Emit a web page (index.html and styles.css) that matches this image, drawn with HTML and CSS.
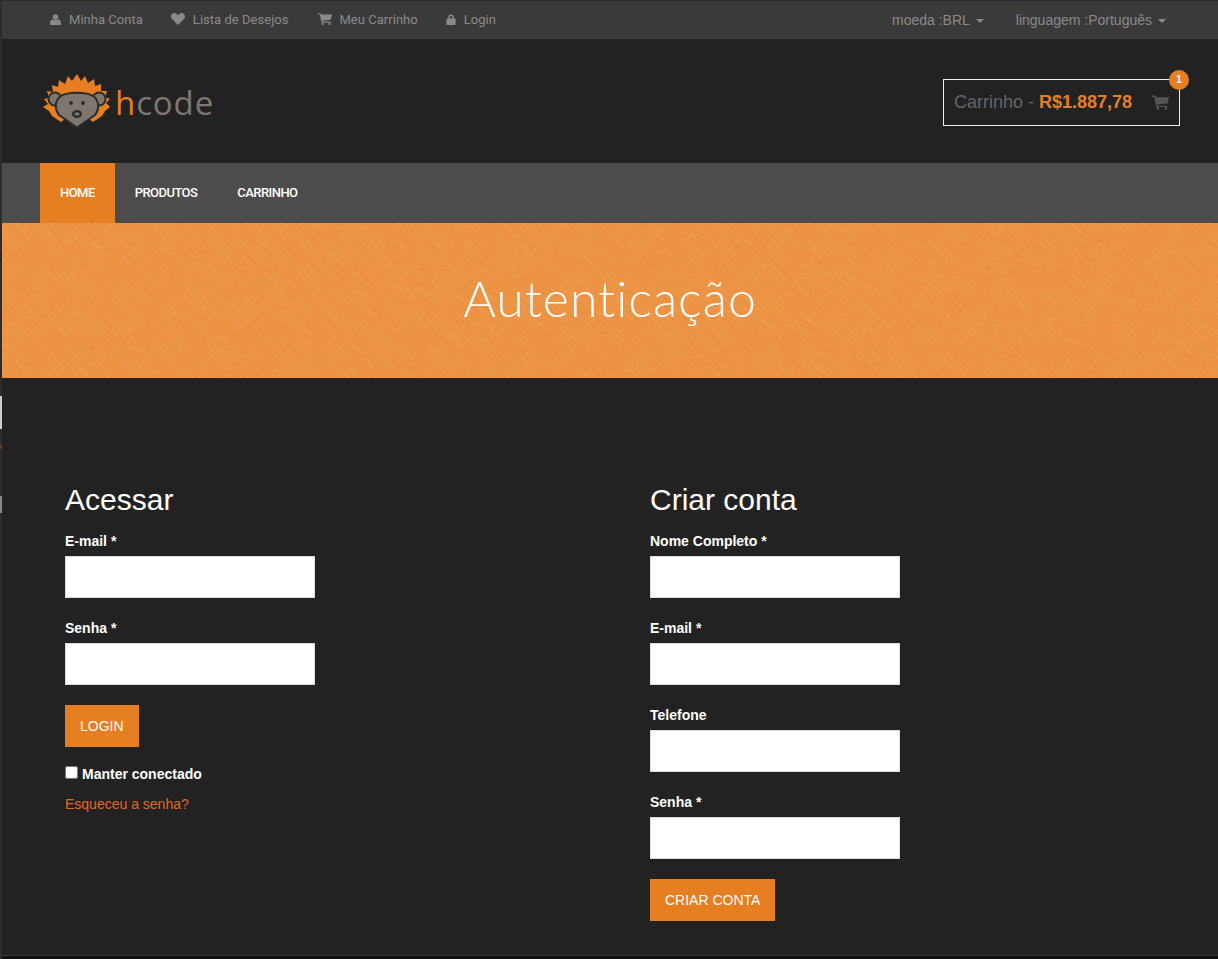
FILE: index.html
```html
<!DOCTYPE html>
<html lang="pt-BR">
<head>
<meta charset="utf-8">
<title>Autenticação</title>
<link rel="stylesheet" href="styles.css">
</head>
<body>
<div class="edge"><i class="e1"></i><i class="e2"></i><i class="e3"></i></div>
<div class="page">
  <div class="topbar">
    <ul class="usermenu">
      <li><svg class="ico user" viewBox="0 0 12 12"><circle cx="6" cy="3.2" r="3"/><path d="M1 12c-.6 0-1-.4-1-1C0 8.200.8 5.800 2.800 5.600 3.600 6.400 4.700 6.900 6 6.900s2.400-.5 3.200-1.300C11.200 5.800 12 8.200 12 11c0 .6-.4 1-1 1z"/></svg>Minha Conta</li>
      <li><svg class="ico wide" viewBox="0 0 14 12"><path d="M7 12 1 6C-.4 4.500-.3 2 1 .9 2.400-.3 4.300-.2 5.600 1L7 2.300 8.400 1c1.300-1.200 3.200-1.300 4.600-.1 1.300 1.100 1.400 3.600 0 5.100z"/></svg>Lista de Desejos</li>
      <li><svg class="ico wide cart" viewBox="0 0 14 12"><path d="M0 .3h2.600l.4 1.300h11l-1.200 5.200-8.500.9.200.9h8v1.100H3.600L1.800 1.400H0z"/><circle cx="4.700" cy="10.900" r="1.100"/><circle cx="11.600" cy="10.900" r="1.100"/></svg>Meu Carrinho</li>
      <li><svg class="ico lock" viewBox="0 0 10 12"><path d="M2 5V3.500a3 3 0 0 1 6 0V5h1.200c.5 0 .8.300.8.800v5.400c0 .5-.3.800-.8.800H.8c-.5 0-.8-.3-.8-.8V5.800C0 5.300.3 5 .8 5zm1.600 0h2.800V3.500a1.400 1.400 0 0 0-2.800 0z"/></svg>Login</li>
    </ul>
    <ul class="prefs">
      <li>moeda :BRL<b class="caret"></b></li>
      <li>linguagem :Português<b class="caret"></b></li>
    </ul>
  </div>

  <header class="brand">
    <a class="logo" href="#">
      <svg class="mark" viewBox="0 0 67 54">
        <path class="fur" d="M18 48 9 42 6 37 0 33 5 30 1 25 6 24 4 17 10 18 9 11 15 13 16 6 22 10 25 2 29 7 34 0 38 7 42 2 45 9 51 5 52 12 58 10 58 17 64 17 62 23 67 25 63 29 67 33 62 37 59 42 50 48 34 36Z"/>
        <circle class="ear" cx="12" cy="25" r="6.500"/>
        <circle class="ear" cx="56" cy="25" r="6.500"/>
        <path class="face" d="M34 53.500 16 41C11 35 12 26 18 22 24 17.500 44 17.500 50 22 56 26 57 35 52 41Z"/>
        <circle class="dark" cx="28" cy="29" r="1.900"/><circle class="dark" cx="40" cy="29" r="1.900"/>
        <ellipse class="dark" cx="34" cy="40" rx="5" ry="4"/><ellipse class="face-in" cx="34" cy="40" rx="2.600" ry="1.800"/>
      </svg>
      <span class="word"><em>h</em>code</span>
    </a>
    <div class="cartbox">
      <span class="cartlabel">Carrinho - <strong>R$1.887,78</strong></span>
      <svg class="carticon" viewBox="0 0 14 12"><path d="M0 .3h2.600l.4 1.300h11l-1.200 5.200-8.500.9.200.9h8v1.100H3.600L1.800 1.400H0z"/><circle cx="4.700" cy="10.900" r="1.100"/><circle cx="11.600" cy="10.900" r="1.100"/></svg>
      <span class="badge">1</span>
    </div>
  </header>

  <nav class="mainnav">
    <a class="active" href="#">Home</a>
    <a href="#">Produtos</a>
    <a href="#">Carrinho</a>
  </nav>

  <section class="hero">
    <svg class="grain" width="1216" height="155" aria-hidden="true">
      <defs>
        <filter id="brush" x="-400" y="-900" width="2400" height="2000" filterUnits="userSpaceOnUse" primitiveUnits="userSpaceOnUse">
          <feTurbulence type="fractalNoise" baseFrequency="0.03 0.7" numOctaves="3" seed="7"/>
          <feColorMatrix type="matrix" values="0 0 0 0 0.80  0 0 0 0 0.42  0 0 0 0 0.10  2.600 0 0 0 -1.050"/>
        </filter>
        <filter id="brush2" x="-400" y="-900" width="2400" height="2000" filterUnits="userSpaceOnUse" primitiveUnits="userSpaceOnUse">
          <feTurbulence type="fractalNoise" baseFrequency="0.04 0.6" numOctaves="2" seed="21"/>
          <feColorMatrix type="matrix" values="0 0 0 0 1  0 0 0 0 0.78  0 0 0 0 0.55  2.200 0 0 0 -1"/>
        </filter>
      </defs>
      <rect class="stroke-a" x="-400" y="-900" width="2400" height="2000" filter="url(#brush)" transform="rotate(40)"/>
      <rect class="stroke-b" x="-400" y="-900" width="2400" height="2000" filter="url(#brush2)" transform="rotate(42)"/>
    </svg>
    <h1>Autenticação</h1>
  </section>

  <main class="forms">
    <form class="col">
      <h2>Acessar</h2>
      <label class="field">E-mail *<input type="text"></label>
      <label class="field">Senha *<input type="password"></label>
      <button class="btn" type="button">LOGIN</button>
      <label class="remember"><input type="checkbox">Manter conectado</label>
      <a class="forgot" href="#">Esqueceu a senha?</a>
    </form>
    <form class="col">
      <h2>Criar conta</h2>
      <label class="field">Nome Completo *<input type="text"></label>
      <label class="field">E-mail *<input type="text"></label>
      <label class="field">Telefone<input type="text"></label>
      <label class="field">Senha *<input type="password"></label>
      <button class="btn" type="button">CRIAR CONTA</button>
    </form>
  </main>
</div>
</body>
</html>
```
FILE: styles.css
```css
* { box-sizing: border-box; }
html, body { margin: 0; height: 100%; }
body { display: flex; background: #111; font-family: "Liberation Sans", Arial, sans-serif; color: #fff; overflow: hidden; }
.edge { width: 2px; flex: none; background: #2c2c2c; position: relative; }
.edge i { position: absolute; left: 0; width: 2px; }
.e1 { top: 396px; height: 33px; background: #ccc; }
.e2 { top: 445px; height: 4px; background: #7a3a10; }
.e3 { top: 496px; height: 17px; background: #888; }
.page { flex: 1; min-width: 0; }
ul { list-style: none; margin: 0; padding: 0; display: flex; }

.topbar { height: 39px; display: flex; justify-content: space-between; align-items: center; padding: 0 52px 0 48px; background: #3a3a3a; border-top: 1px solid #2a2a2a; }
.usermenu { gap: 28px; font: 400 13px Roboto, sans-serif; color: #8a8a8a; margin-bottom: 2px; letter-spacing: .03px; }
.usermenu li { display: flex; align-items: center; }
.ico { fill: #8a8a8a; }
.ico.user { width: 11px; height: 11px; margin-right: 8px; }
.ico.wide { width: 14px; height: 12px; margin-right: 8px; }
.ico.cart { margin-left: 2px; margin-right: 7px; }
.ico.lock { width: 10px; height: 11px; margin-right: 8px; }
.prefs { gap: 32px; font-size: 14px; color: #8a8a8a; }
.caret { display: inline-block; border-top: 4px solid #8a8a8a; border-left: 4px solid transparent; border-right: 4px solid transparent; margin-left: 6px; vertical-align: 2px; }

.brand { height: 124px; background: #222; display: flex; justify-content: space-between; align-items: center; padding: 0 38px 0 41px; }
.logo { display: flex; align-items: center; text-decoration: none; }
.mark { width: 67px; height: 54px; }
.fur { fill: #e67e22; }
.ear { fill: #7d7770; stroke: #2b2b2b; stroke-width: 2; }
.face { fill: #7d7770; stroke: #2b2b2b; stroke-width: 2; stroke-linejoin: round; }
.face-in { fill: #7d7770; }
.dark { fill: #2b2b2b; }
.word { font: 500 33px/1 "Open Sans", sans-serif; color: #7d7770; margin: 2px 0 0 5px; letter-spacing: .9px; }
.word em { font-style: normal; color: #e67e22; }
.cartbox { position: relative; width: 237px; height: 47px; border: 1px solid #eee; display: flex; align-items: center; justify-content: space-between; padding: 0 10px; margin-top: 3px; }
.cartlabel { font-size: 18px; color: #666; }
.cartlabel strong { color: #e67e22; }
.carticon { width: 17px; height: 15px; fill: #555; }
.badge { position: absolute; top: -10px; right: -10px; width: 20px; height: 20px; border-radius: 50%; background: #e67e22; color: #fff; font-size: 10px; font-weight: 700; text-align: center; line-height: 20px; }

.mainnav { height: 60px; display: flex; padding-left: 38px; background: #4c4c4c; }
.mainnav a { padding: 0 20px; font: 500 13px/59px Roboto, sans-serif; letter-spacing: -.55px; color: #fff; text-transform: uppercase; text-decoration: none; }
.mainnav a.active { background: #e67e22; }

.hero { position: relative; height: 155px; display: flex; align-items: center; justify-content: center; background-color: #ec9141; overflow: hidden; }
.grain { position: absolute; left: 0; top: 0; }
.stroke-a { opacity: .3; }
.stroke-b { opacity: .12; }
.hero h1 { position: relative; margin: 0 0 6px 0; font: 300 50px/1 Lato, sans-serif; color: #fff; font-variant-ligatures: none; letter-spacing: 1px; }

.forms { height: 578px; background: #222; border-bottom: 1px solid #333; display: grid; grid-template-columns: 585px 1fr; padding: 104px 0 0 63px; }
.col { display: flex; flex-direction: column; align-items: flex-start; }
h2 { margin: 0 0 13px; font-weight: 400; font-size: 30px; line-height: 36px; }
.field { display: block; font-size: 14px; font-weight: 700; line-height: 20px; margin-bottom: 20px; }
.field input { display: block; width: 250px; height: 42px; margin-top: 5px; border: 1px solid #ddd; background: #fff; padding: 0 10px; outline: 0; }
.btn { height: 42px; padding: 0 15px; background: #e67e22; color: #fff; border: 0; font: 400 14px "Liberation Sans", Arial, sans-serif; }
.remember { display: flex; align-items: center; font-size: 14px; font-weight: 700; margin-top: 18px; line-height: 18px; }
.remember input { width: 13px; height: 13px; margin: 0 4px 0 0; position: relative; top: -2px; }
.forgot { margin-top: 12px; font-size: 14px; line-height: 18px; color: #e8651f; text-decoration: none; }
```
